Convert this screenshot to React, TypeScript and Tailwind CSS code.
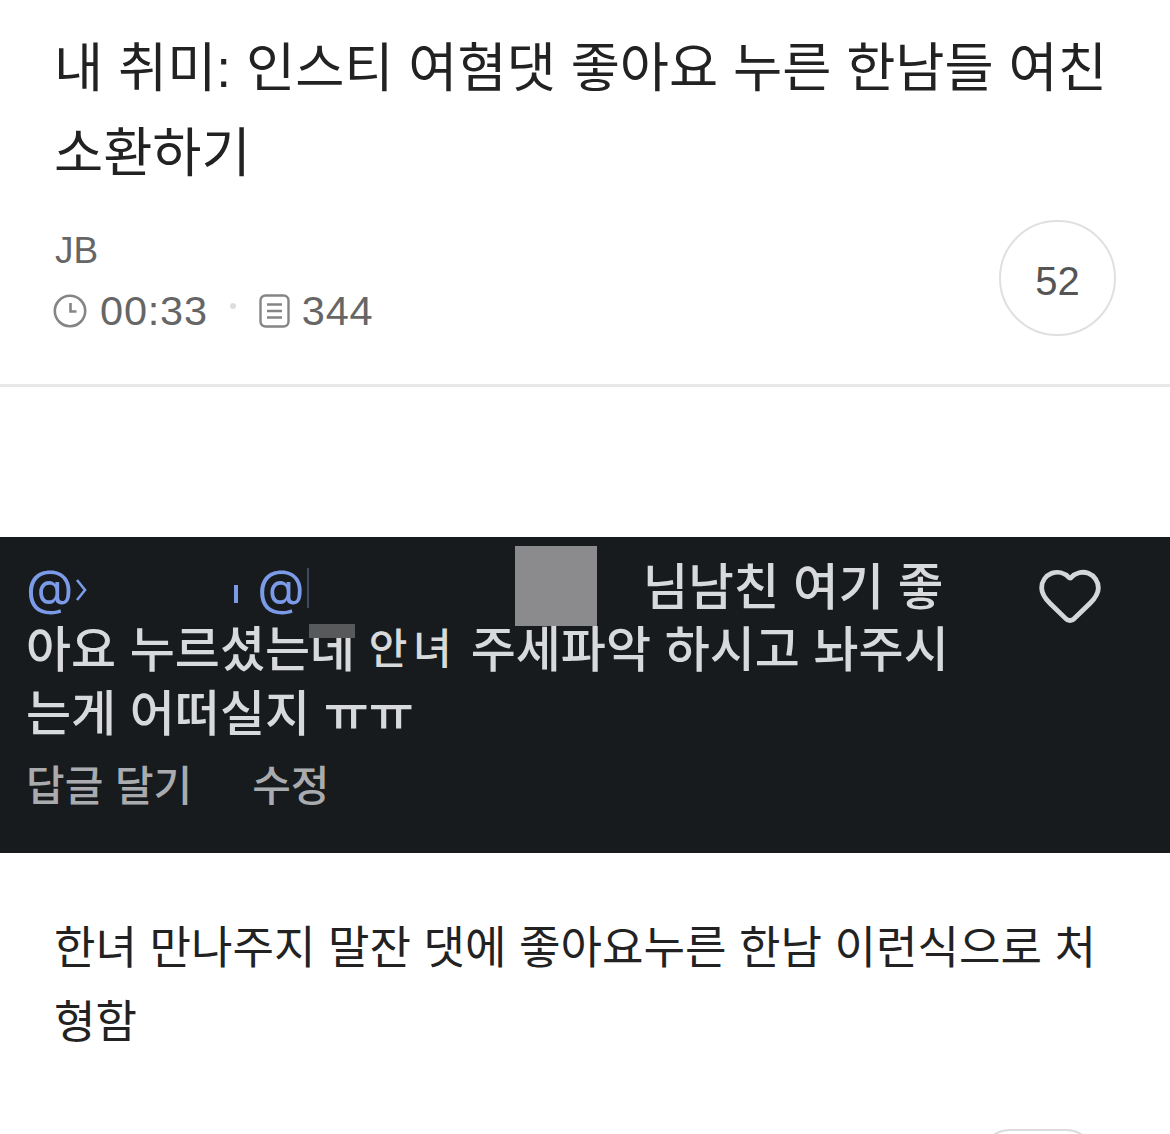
import { Heart } from 'lucide-react';

const cjk = "font-['Liberation_Sans','Noto_Sans_CJK_KR',sans-serif]";

function ClockIcon() {
  return (
    <svg className="-ml-[2px]" width="34" height="34" viewBox="0 0 34 34" fill="none" stroke="#858585" strokeWidth="2.6">
      <circle cx="17" cy="17" r="15.2" />
      <path d="M17.5 9v8.5h6" />
    </svg>
  );
}

function ListIcon() {
  return (
    <svg width="31" height="34" viewBox="0 0 31 34" fill="none" stroke="#858585" strokeWidth="2.4">
      <rect x="1.5" y="1.5" width="28" height="31" rx="5" />
      <path d="M8 10.5h15M8 17h15M8 23.5h15" />
    </svg>
  );
}

export default function App() {
  return (
    <div className={`w-[1170px] h-[1134px] overflow-hidden bg-white ${cjk}`}>
      {/* Header */}
      <header className="h-[387px] border-b-[3px] border-[#e8e8e8] pl-[55px] pr-[54px] pt-[26px]">
        <h1 className="-ml-[1px] text-[53.45px] leading-[85px] text-[#222222]">
          내 취미: 인스티 여혐댓 좋아요 누른 한남들 여친 소환하기
        </h1>
        <div className="flex items-start justify-between mt-[24px]">
          <div className="text-[#666666]">
            <div className="text-[37px] leading-[44px] mt-[9px]">JB</div>
            <div className="flex items-center mt-[16px] text-[41.5px] leading-[44px] tracking-[0.8px]">
              <ClockIcon />
              <span className="ml-[13px]">00:33</span>
              <span className="ml-[22px] mb-[10px] w-[6px] h-[6px] rounded-full bg-[#dddddd]" />
              <span className="ml-[23px]"><ListIcon /></span>
              <span className="ml-[12px]">344</span>
            </div>
          </div>
          <div className="w-[117px] h-[116px] rounded-full border-2 border-[#e0e0e0] flex items-center justify-center pt-[5px] text-[40px] text-[#555555]">
            52
          </div>
        </div>
      </header>

      {/* Captured comment */}
      <section className="relative mt-[150px] h-[316px] bg-[#181b1e] pl-[26px] pt-[21px]">
        <div className="relative w-[1000px] text-[49px] leading-[64px] text-[#d8d9db] font-medium">
          <div className="flex items-center h-[60px]">
            <span className="font-['Inter',sans-serif] text-[#7b9be8] font-normal">@</span>
            <svg className="ml-[1px] mt-[4px]" width="14" height="26" viewBox="0 0 14 26" fill="none" stroke="#7b9be8" strokeWidth="2.6">
              <path d="M3 3l8 10-8 10" />
            </svg>
            <span className="ml-[146px] w-[4px] h-[18px] mt-[12px] bg-[#7b9be8]" />
            <span className="ml-[19px] font-['Inter',sans-serif] text-[#7b9be8] font-normal">@</span>
            <span className="ml-[2px] w-[2px] h-[40px] bg-[#3d4a66]" />
            <span className="ml-[334px] whitespace-nowrap text-[49.5px]">님남친 여기 좋</span>
          </div>
          <div className="flex whitespace-pre">
            <span>아요 누르셨는데 </span>
            <span className="text-[42px] tracking-[5.5px]">안녀</span>
            <span> 주세파악 하시고 놔주시</span>
          </div>
          <div className="whitespace-nowrap">는게 어떠실지 ㅠㅠ</div>
          <div className="flex gap-[60px] mt-[11px] text-[42px] leading-[60px] text-[#a9abaf]">
            <span>답글 달기</span>
            <span>수정</span>
          </div>
        </div>
        <div className="absolute left-[515px] top-[9px] w-[82px] h-[80px] bg-[#8b8b8d]" />
        <div className="absolute left-[309px] top-[87px] w-[46px] h-[14px] bg-[#58595b]" />
        <Heart className="absolute left-[1036px] top-[24px] w-[68px] h-[68px] text-[#d5d6d8]" strokeWidth={1.7} />
      </section>

      {/* Body text */}
      <p className="-ml-[1px] px-[55px] mt-[59px] text-[45.1px] leading-[74px] text-[#222222]">
        한녀 만나주지 말잔 댓에 좋아요누른 한남 이런식으로 처형함
      </p>

      {/* Next button, cut off by the screenshot edge */}
      <div className="ml-[980px] mt-[69px] w-[116px] h-[60px] rounded-[30px] border-2 border-[#dcdcdc]" />
    </div>
  );
}
